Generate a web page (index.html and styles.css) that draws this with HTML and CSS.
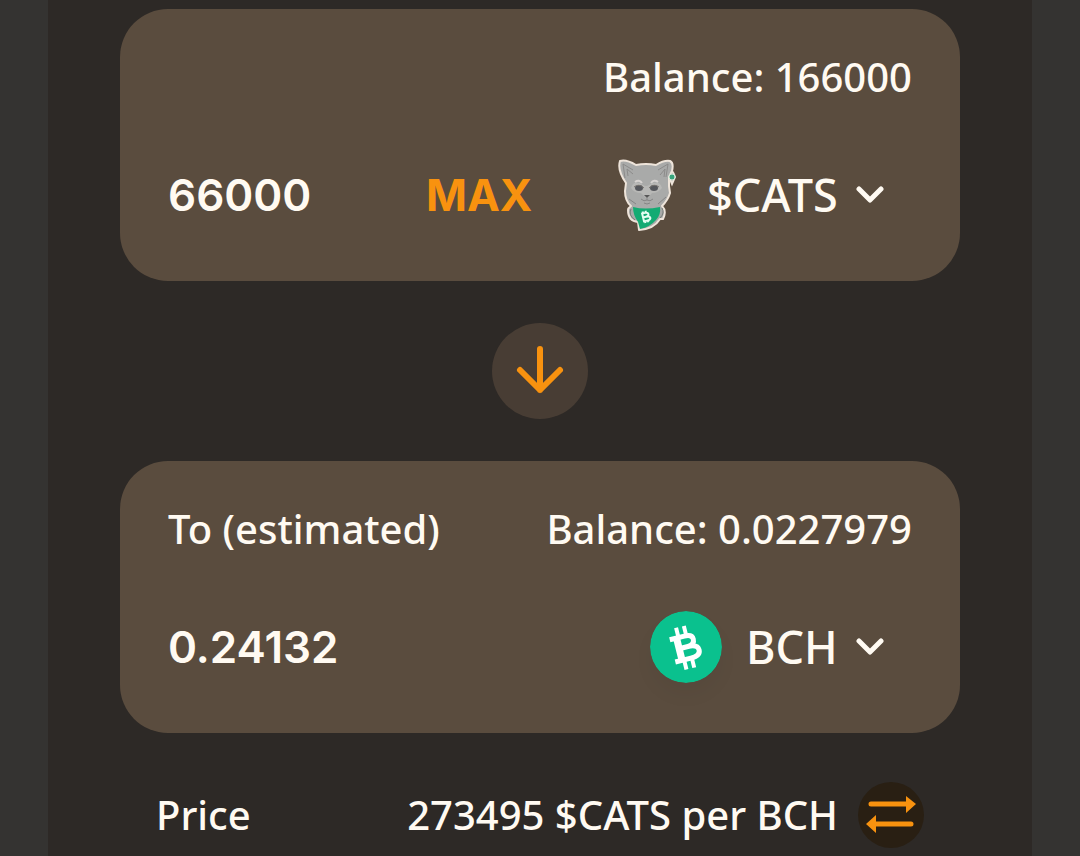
FILE: index.html
```html
<!DOCTYPE html>
<html lang="en">
<head>
<meta charset="utf-8">
<meta name="viewport" content="width=device-width, initial-scale=1">
<title>Swap</title>
<link rel="stylesheet" href="styles.css">
</head>
<body>
<main class="panel">

<section class="card">
<div class="card-top">
	<span class="balance">Balance: 166000</span>
</div>
<div class="card-row">
	<input class="amount" id="from_amount" type="text" inputmode="decimal" aria-label="From amount" value="66000">
	<button class="max" type="button">MAX</button>
	<div class="token">
		<svg class="logo" viewBox="0 0 72 72" aria-hidden="true">
			<path d="M56 13 Q61 8 64 18 L61 25 Z" fill="#a6a6a4" stroke="#eee4da" stroke-width="2"/>
			<path d="M9 2 Q15 0 25 6 Q35 4 45 6 Q53 1 59 2 Q63 4 61 12 L58 18 L58 27 L59 34 Q57 41 51 47 Q56 52 52 60 L49 60 Q43 70 28 71 L27 63 Q17 62 17 51 Q17 49 20 47 Q14 42 14 32 L15 24 Q6 11 9 2 Z" fill="#a9aaa9" stroke="#eee4da" stroke-width="2" stroke-linejoin="round"/>
			<path d="M14 19 L12 5 L22 11 M47 11 L57 5 L55 18 M17 17 L16 10 L22 15 M49 16 L54 10 L53 18" fill="none" stroke="#8c8b8a" stroke-width="1"/>
			<path d="M20 29 Q23 20 32 26 Q35 28 38 26 Q48 20 51 29 Q47 34 41 34 L36 40 L30 34 Q23 34 20 29 Z" fill="#b8b8b6"/>
			<path d="M24 23 Q28 20 31 24 M40 24 Q43 20 47 23" fill="none" stroke="#d7d3d1" stroke-width="2"/>
			<ellipse cx="28" cy="29" rx="4" ry="3" fill="#55575c"/>
			<ellipse cx="43" cy="29" rx="4" ry="3" fill="#55575c"/>
			<path d="M23 28 Q28 24 33 29 M38 29 Q43 24 48 28" fill="none" stroke="#77736f" stroke-width="1"/>
			<path d="M33 36 H39 L36 39 Z" fill="#575757"/>
			<path d="M36 39 V41 M30 40 Q33 43 36 41 Q39 43 42 40 M33 44 Q36 46 39 44 M18 40 L25 45 M47 45 L55 38" fill="none" stroke="#858585" stroke-width="1"/>
			<path d="M22 48 Q34 51 49 48 Q50 56 45 61 Q39 68 29 70 L27 63 Q22 56 22 48 Z" fill="#14ab73"/>
			<path d="M20 50 Q17 56 24 61 M51 49 Q54 54 49 59" fill="none" stroke="#777b77" stroke-width="1"/>
			<g transform="rotate(-14 34 58)" fill="none" stroke="#e7fff4" stroke-width="2"><path d="M31 54 H35 Q38 54 38 56 Q38 58 35 58 H32 M35 58 Q39 58 39 60 Q39 62 35 62 H31 M32 54 V62 M33 52 V54 M36 52 V54 M33 62 V64 M36 62 V64"/></g>
			<circle cx="61" cy="18" r="3" fill="#38a57c" stroke="#d5e8d9" stroke-width="1"/>
		</svg>
		<select class="token-name" id="from_token" aria-label="From token"><option>$CATS</option></select>
		<svg class="chevron" viewBox="0 0 28 18" aria-hidden="true"><path d="M3 3 L14 14 L25 3"/></svg>
	</div>
</div>
</section>

<button class="flip" type="button" aria-label="Switch tokens">
	<svg viewBox="0 0 96 96" aria-hidden="true"><path d="M48 26 V67 M28 47 L48 67 L68 47"/></svg>
</button>

<section class="card">
<div class="card-top">
	<label for="to_amount">To (estimated)</label>
	<span class="balance">Balance: 0.0227979</span>
</div>
<div class="card-row">
	<input class="amount" id="to_amount" type="text" inputmode="decimal" value="0.24132">
	<div class="token">
		<svg class="logo round" viewBox="0 0 72 72" aria-hidden="true">
			<circle cx="36" cy="36" r="36" fill="#0ac18e"/>
			<g transform="rotate(-14 36 36)" fill="none" stroke="#fff">
				<path d="M22 25 H37 Q45 25 45 30 Q45 36 38 36 H30 M38 36 Q48 36 48 42 Q48 48 38 48 H22" stroke-width="5"/>
				<path d="M29 24 V49" stroke-width="7"/>
				<path d="M31 15 V24 M39 15 V24 M31 49 V58 M39 49 V58" stroke-width="4"/>
			</g>
		</svg>
		<select class="token-name" id="to_token" aria-label="To token"><option>BCH</option></select>
		<svg class="chevron" viewBox="0 0 28 18" aria-hidden="true"><path d="M3 3 L14 14 L25 3"/></svg>
	</div>
</div>
</section>

<div class="price">
	<span>Price</span>
	<span class="rate">273495 $CATS per BCH</span>
	<button class="invert" type="button" aria-label="Invert price">
		<svg viewBox="0 0 66 66" aria-hidden="true">
			<path class="line" d="M13 22 H49 M17 42 H53"/>
			<path class="head" d="M48 14 L58 22 L48 31 Z M18 33 L8 42 L18 51 Z"/>
		</svg>
	</button>
</div>

</main>
</body>
</html>
```
FILE: styles.css
```css
* {
box-sizing: border-box;
}

body {
margin: 0;
background: #343331;
color: #fffaf2;
font-family: "Noto Sans", sans-serif;
font-size: 40px;
font-weight: 500;
line-height: 48px;
}

button, input, select {
margin: 0; padding: 0;
border: 0;
background: none;
color: inherit;
font: inherit;
}

button, select {
cursor: pointer;
}

svg {
display: block;
}

.panel {
margin: 0 48px;
padding: 9px 72px 8px;
min-height: 100vh;
background: #2d2926;
}

.card {
padding: 44px 48px 50px;
border-radius: 48px;
background: #5a4c3e;
}

.card-top {
display: flex;
justify-content: space-between;
margin-bottom: 58px;
}

.balance {
margin-left: auto;
}

.card-row {
display: flex;
align-items: center;
height: 72px;
}

.amount {
width: 258px;
min-width: 0;
font-family: Inter, sans-serif;
font-size: 44px;
font-weight: 600;
}

.max {
color: #f8920f;
font-family: Inter, sans-serif;
font-size: 44px;
font-weight: 700;
}

.token {
display: flex;
align-items: center;
margin-left: auto;
padding-right: 28px;
font-size: 45px;
}

.logo {
width: 72px;
height: 72px;
margin-right: 24px;
}

.round {
border-radius: 50%;
box-shadow: 0 12px 20px rgba(0, 0, 0, 0.04);
}

.token-name {
appearance: none;
}

.chevron {
width: 28px;
height: 18px;
margin-left: 18px;
fill: none;
stroke: #fffaf2;
stroke-width: 5px;
stroke-linecap: round;
stroke-linejoin: round;
}

.flip {
display: block;
width: 96px;
height: 96px;
margin: 42px auto;
border-radius: 50%;
background: #483d34;
}

.flip path {
fill: none;
stroke: #f8920f;
stroke-width: 6px;
stroke-linecap: round;
stroke-linejoin: round;
}

.price {
display: flex;
align-items: center;
margin-top: 49px;
padding: 0 36px;
}

.rate {
margin-left: auto;
}

.invert {
width: 66px;
height: 66px;
margin-left: 20px;
border-radius: 50%;
background: #291f13;
}

.line {
stroke: #f8920f;
stroke-width: 5px;
stroke-linecap: round;
}

.head {
fill: #f8920f;
}
```
